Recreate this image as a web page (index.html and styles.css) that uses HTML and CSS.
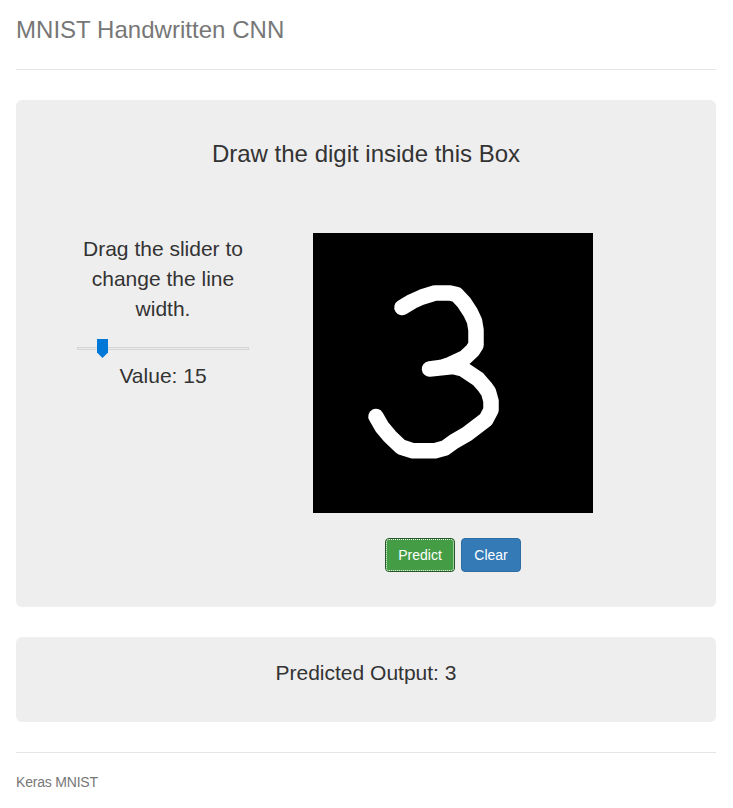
FILE: index.html
```html
<!DOCTYPE html>
<html lang="en">
<head>
<meta charset="utf-8">
<title>MNIST Handwritten CNN</title>
<link rel="stylesheet" href="styles.css">
</head>
<body>
<div class="container">
  <header class="header"><h3>MNIST Handwritten CNN</h3></header>
  <main class="jumbotron draw">
    <h3 class="draw-title">Draw the digit inside this Box</h3>
    <div class="row">
      <div class="controls">
        <p>Drag the slider to change the line width.</p>
        <div class="slider">
          <svg class="thumb" width="11" height="19" viewBox="0 0 11 19"><path d="M0 0H11V13.5L5.5 19L0 13.5Z" fill="#0078d7"/></svg>
        </div>
        <p>Value: 15</p>
      </div>
      <div class="board">
        <svg class="canvas" width="280" height="280" viewBox="0 0 280 280">
          <path d="M89 74.5L99 68.5L109 64L122 60L137 60L143.5 61.5L151 69.5L157.5 79.5L161.5 88L163 97L163 112L159.5 117.5L152 124.5L137 131.5L128 134.5L116.5 136L140 133.5L150 136L165 146L172 154L175.5 159L178 168L178 177L173 186.500L154 201L141 208.500L132 215L122 217.800L100 217.800L88 214L77 203.500L69 194L63 183.500" fill="none" stroke="#fff" stroke-width="15.500" stroke-linecap="round" stroke-linejoin="round"/>
        </svg>
        <div class="buttons">
          <button class="btn predict">Predict</button>
          <button class="btn clear">Clear</button>
        </div>
      </div>
    </div>
  </main>
  <section class="jumbotron output"><p>Predicted Output: 3</p></section>
  <footer class="footer">Keras MNIST</footer>
</div>
</body>
</html>
```
FILE: styles.css
```css
* { box-sizing: border-box; }
body {
  margin: 0;
  background: #fff;
  color: #333;
  font: 14px/20px "Liberation Sans", Arial, sans-serif;
}
.container { width: 700px; margin-left: 16px; }
h3, p { margin: 0; font-weight: 400; }
h3 { font-size: 24px; }
.header {
  height: 70px;
  padding-top: 10px;
  border-bottom: 1px solid #e5e5e5;
}
.header h3 { line-height: 40px; color: #777; letter-spacing: 0.03px; }
.jumbotron {
  margin-top: 30px;
  background: #eee;
  border-radius: 6px;
  text-align: center;
  font-size: 21px;
  line-height: 30px;
}
.draw { height: 507px; padding-top: 41px; }
.draw-title { line-height: 26px; }
.row {
  display: flex;
  margin-top: 66px;
  padding-left: 61px;
  gap: 64px;
}
.controls { width: 172px; }
.slider {
  position: relative;
  height: 3px;
  margin: 23px 0 11px;
  border: 1px solid #d6d6d6;
  background: #e7eaea;
}
.controls p:first-child { padding-top: 1px; }
.thumb { position: absolute; left: 19px; top: -9px; }
.board { width: 280px; }
.canvas { display: block; background: #000; }
.buttons {
  display: flex;
  justify-content: center;
  gap: 6px;
  margin-top: 25px;
}
.btn {
  height: 34px;
  padding: 0;
  border: 1px solid;
  border-radius: 4px;
  color: #fff;
  font: 14px/20px "Liberation Sans", Arial, sans-serif;
}
.predict {
  width: 70px;
  background: #449d44;
  border-color: #255625;
  outline: 1px dotted #fff;
  outline-offset: -2px;
}
.clear { width: 60px; background: #337ab7; border-color: #2e6da4; }
.output { height: 85px; padding-top: 21px; }
.footer {
  margin-top: 30px;
  padding-top: 19px;
  border-top: 1px solid #e5e5e5;
  color: #777;
  letter-spacing: -0.2px;
}
```
